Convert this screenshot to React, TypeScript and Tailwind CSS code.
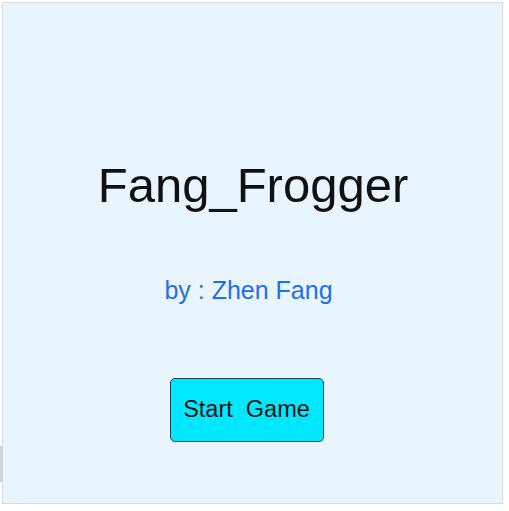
export default function App() {
  return (
    <div className="relative w-[509px] h-[511px] bg-white" style={{ fontFamily: '"Liberation Sans", Arial, sans-serif' }}>
      {/* left scrollbar sliver */}
      <div className="absolute left-0 top-[444px] w-[3px] h-[36px] bg-[#d4d4d4]" />
      <div className="ml-[2px] mt-[2px] w-[501px] h-[502px] border border-[#d9dde2] bg-[#e9f5fe] flex flex-col items-center">
        <h1 className="mt-[158px] ml-[1px] text-[49px] leading-none text-[#111]">Fang_Frogger</h1>
        <p className="mt-[68px] -ml-[8px] text-[25px] leading-none text-[#1f6ff0]">by : Zhen Fang</p>
        <button className="mt-[75px] -ml-[12px] w-[154px] h-[64px] rounded-[5px] border border-[#16474f] bg-[#00e8ff] text-[23.5px] text-[#111] whitespace-pre">
          Start  Game
        </button>
      </div>
    </div>
  );
}
